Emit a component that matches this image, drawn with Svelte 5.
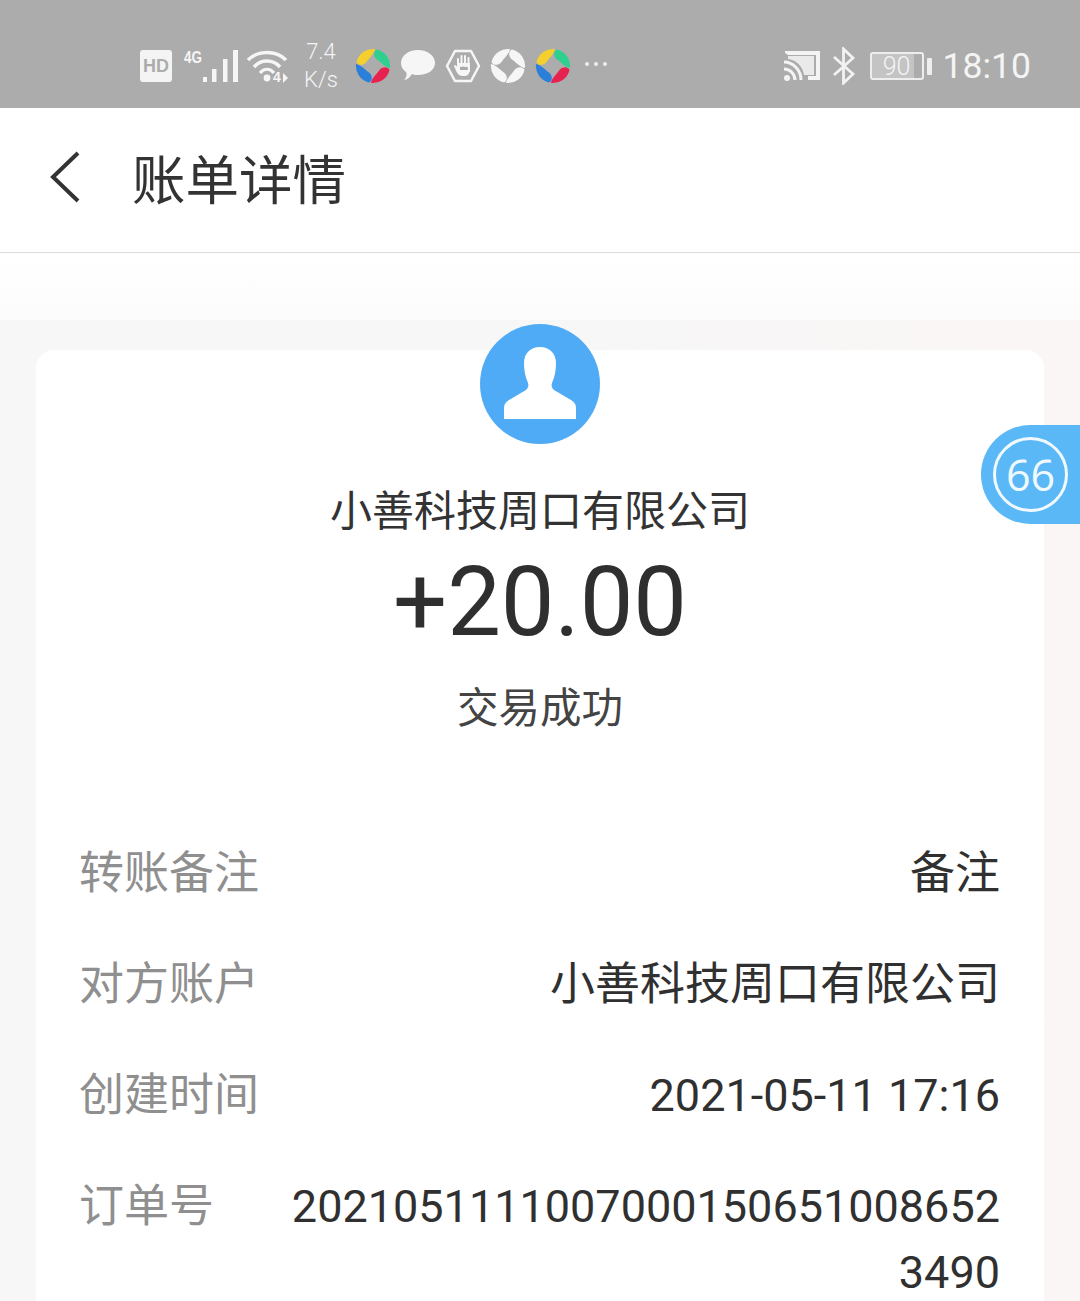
<script lang="ts">
	const rows = [
		{ label: '转账备注', value: '备注' },
		{ label: '对方账户', value: '小善科技周口有限公司' },
		{ label: '创建时间', value: '2021-05-11 17:16' },
		{ label: '订单号', value: '20210511110070001506510086523490' }
	];
	const petals = [
		{ color: '#f5cf2e', rot: 0 },
		{ color: '#2fcf8f', rot: 90 },
		{ color: '#e8224e', rot: 180 },
		{ color: '#2c7fd8', rot: 270 }
	];
	const petal = 'M-16.500 -4 A17 17 0 0 1 2 -17 C1 -12 -3 -9 -6.500 -4 C-9 -0.500 -15 0 -16.500 -4Z';
</script>

{#snippet swirl(colored: boolean)}
	<svg class="ic swirl" viewBox="-18 -18 36 36">
		{#each petals as p}
			<path d={petal} fill={colored ? p.color : '#f6f6f6'} transform="rotate({p.rot})" />
		{/each}
	</svg>
{/snippet}

<div class="page">
	<div class="statusbar">
		<div class="status-left">
			<svg class="ic hd" viewBox="0 0 32 32">
				<rect width="32" height="32" rx="3" fill="#f4f4f4" />
				<text x="16" y="22" text-anchor="middle" class="hd-text" textLength="26" lengthAdjust="spacingAndGlyphs">HD</text>
			</svg>
			<svg class="ic signal" viewBox="0 0 54 34">
				<text x="0" y="14" class="g4" textLength="18" lengthAdjust="spacingAndGlyphs">4G</text>
				<rect x="19" y="28" width="4" height="5" fill="#f6f6f6" />
				<rect x="28" y="20" width="4.500" height="13" fill="#f6f6f6" />
				<rect x="39" y="10" width="4.500" height="23" fill="#f6f6f6" />
				<rect x="49" y="1" width="5" height="32" fill="#f6f6f6" />
			</svg>
			<svg class="ic wifi" viewBox="0 0 42 34" overflow="visible">
				<path d="M1 11 C11 1 29 1 39 11" fill="none" stroke="#f6f6f6" stroke-width="3.600" />
				<path d="M7 18 C14 10 26 10 33 18" fill="none" stroke="#f6f6f6" stroke-width="3.600" />
				<path d="M13 24 C17 19 23 19 27 24" fill="none" stroke="#f6f6f6" stroke-width="3.200" />
				<circle cx="20" cy="29" r="3.400" fill="#f6f6f6" />
				<text x="26" y="33" class="g4 small">4</text>
				<path d="M36 24 L41 29 L36 34Z" fill="#f6f6f6" />
			</svg>
			<div class="speed"><span>7.4</span><span>K/s</span></div>
			{@render swirl(true)}
			<svg class="ic bubble" viewBox="0 0 36 34">
				<path d="M18 1 C28 1 35 7 35 14 C35 21 28 26 18 26 C16 26 14 26 12 25 C10 28 7 31 4 31 C7 28 7 25 6 23 C3 21 1 18 1 14 C1 7 8 1 18 1Z" fill="#f6f6f6" />
			</svg>
			<svg class="ic hand" viewBox="0 0 36 34">
				<path d="M10 2 H26 L34 17 L26 32 H10 L2 17Z" fill="none" stroke="#f6f6f6" stroke-width="2.500" stroke-linejoin="round" />
				<path d="M13 17 V10 M16.500 17 V7 M20 17 V7 M23.500 18 V9 M10 17 C12 20 12 26 17 26 H20 C23 26 24 23 24 18 M14 15 H24 V22 H14Z" fill="#f6f6f6" stroke="#f6f6f6" stroke-width="2" stroke-linecap="round" />
			</svg>
			{@render swirl(false)}
			{@render swirl(true)}
			<div class="more"><i></i><i></i><i></i></div>
		</div>
		<div class="status-right">
			<svg class="ic cast" viewBox="0 0 38 32">
				<path d="M1 3 V1 H36 V30 H24 V26 H32 V5 H4" fill="#f4f4f4" />
				<path d="M4 6 H30 V25 H20 C19 17 13 10 4 9Z" fill="#f4f4f4" opacity=".85" />
				<path d="M0 12 C9 12 17 20 17 30 M0 19 C6 19 11 24 11 30" fill="none" stroke="#f4f4f4" stroke-width="3" />
				<circle cx="3" cy="28" r="3" fill="#f4f4f4" />
			</svg>
			<svg class="ic bt" viewBox="0 0 24 38">
				<path d="M2 10 L21 27 L11.500 36 V2 L21 11 L2 28" fill="none" stroke="#f2f2f2" stroke-width="2.800" />
			</svg>
			<div class="battery">
				<div class="battery-body"><span>90</span></div>
				<div class="battery-cap"></div>
			</div>
			<span class="clock">18:10</span>
		</div>
	</div>

	<header class="topbar">
		<svg class="back" viewBox="0 0 32 52">
			<path d="M29 2 L4 26 L29 50" fill="none" stroke="#333" stroke-width="4" />
		</svg>
		<h1>账单详情</h1>
	</header>

	<main class="content">
		<div class="fade"></div>
		<section class="card">
			<div class="avatar">
				<svg viewBox="0 0 120 120">
					<path d="M24 95 V84 C24 80 26 78 29 76 L46 66 C48 64 49 62 48 59 C45 52 44 46 44 39 C44 29 51 23 60 23 C69 23 76 29 76 39 C76 46 75 52 72 59 C71 62 72 64 74 66 L91 76 C94 78 96 80 96 84 V95Z" fill="#fff" />
				</svg>
			</div>
			<div class="name">小善科技周口有限公司</div>
			<div class="amount">+20.00</div>
			<div class="state">交易成功</div>
			<dl class="rows">
				{#each rows as row (row.label)}
					<div class="row">
						<dt>{row.label}</dt>
						<dd>{row.value}</dd>
					</div>
				{/each}
			</dl>
		</section>
	</main>

	<div class="float-badge">
		<div class="ring">66</div>
	</div>
</div>

<style>
	:global(body) {
		margin: 0;
		background: #fff;
	}

	.page {
		position: relative;
		width: 1080px;
		height: 1301px;
		overflow: hidden;
		font-family: Roboto, 'Noto Sans CJK SC', sans-serif;
		color: #333;
	}

	.statusbar {
		height: 108px;
		background: #acacac;
		display: flex;
		align-items: center;
		justify-content: space-between;
		padding: 24px 49px 0 140px;
		box-sizing: border-box;
		color: #f4f4f4;
	}

	.status-left,
	.status-right {
		display: flex;
		align-items: center;
	}

	.ic {
		display: block;
		flex: none;
	}

	.hd {
		width: 32px;
		height: 32px;
		margin-right: 12px;
	}

	.hd-text {
		font: 700 19px 'Liberation Sans', sans-serif;
		fill: #acacac;
	}

	.g4 {
		font: 700 17px 'Liberation Sans', sans-serif;
		fill: #f6f6f6;
	}

	.g4.small {
		font-size: 14px;
	}

	.signal {
		width: 54px;
		height: 34px;
		margin-right: 9px;
	}

	.wifi {
		width: 42px;
		height: 34px;
		margin-right: 14px;
	}

	.speed {
		display: flex;
		flex-direction: column;
		align-items: center;
		width: 36px;
		font-size: 22px;
		line-height: 28px;
		margin-right: 16px;
		font-weight: 300;
	}

	.swirl {
		width: 36px;
		height: 36px;
	}

	.bubble {
		width: 36px;
		height: 34px;
		margin: 0 9px 0 9px;
	}

	.hand {
		width: 36px;
		height: 34px;
		margin-right: 9px;
	}

	.swirl + .swirl {
		margin-left: 9px;
	}

	.more {
		display: flex;
		gap: 5px;
		margin-left: 14px;
		margin-bottom: 4px;
	}

	.more i {
		width: 4px;
		height: 4px;
		border-radius: 50%;
		background: #eee;
	}

	.cast {
		width: 38px;
		height: 32px;
		margin-right: 10px;
	}

	.bt {
		width: 24px;
		height: 38px;
		margin-right: 14px;
	}

	.battery {
		display: flex;
		align-items: center;
		gap: 3px;
		margin-right: 11px;
	}

	.battery-body {
		width: 54px;
		height: 28px;
		box-sizing: border-box;
		border: 2px solid #eee;
		border-radius: 3px;
		background: linear-gradient(90deg, #c4c4c4 0 84%, transparent 84%);
		display: flex;
		align-items: center;
		justify-content: center;
		font-size: 25px;
		font-weight: 300;
	}

	.battery-cap {
		width: 5px;
		height: 17px;
		background: #eee;
		border-radius: 1px;
	}

	.clock {
		font-size: 35.500px;
		font-weight: 400;
	}

	.topbar {
		height: 145px;
		box-sizing: border-box;
		background: #fff;
		border-bottom: 1px solid #dcdcdc;
		display: flex;
		align-items: center;
		padding: 0 0 7px 49px;
	}

	.back {
		width: 32px;
		height: 52px;
		margin-right: 51px;
	}

	h1 {
		margin: 0;
		font-size: 53.500px;
		font-weight: 400;
		color: #333;
	}

	.content {
		background: linear-gradient(90deg, #f7f7f7 0 50%, #faf6f5 100%);
		height: 1048px;
	}

	.fade {
		height: 67px;
		background: linear-gradient(#fff, #fcfcfc);
	}

	.card {
		margin: 30px 36px 0;
		background: #fff;
		border-radius: 18px 18px 0 0;
		height: 960px;
		padding: 0 44px;
		display: flex;
		flex-direction: column;
		align-items: center;
	}

	.avatar {
		width: 120px;
		height: 120px;
		border-radius: 50%;
		background: #4fabf5;
		margin-top: -26px;
	}

	.avatar svg {
		display: block;
		width: 120px;
		height: 120px;
	}

	.name {
		margin-top: 38px;
		font-size: 42px;
		line-height: 60px;
		color: #333;
	}

	.amount {
		margin-top: 5px;
		font-size: 95.500px;
		line-height: 110px;
		color: #2f2f2f;
	}

	.state {
		margin-top: 23px;
		font-size: 41.500px;
		line-height: 58px;
		color: #444;
	}

	.rows {
		width: 100%;
		margin: 103px 0 0;
	}

	.row {
		display: flex;
		justify-content: space-between;
		align-items: flex-start;
		margin-bottom: 45px;
		font-size: 45px;
		line-height: 66px;
	}

	dt {
		flex: none;
		margin-left: -1px;
		color: #8f8f8f;
	}

	dd {
		margin: 0;
		max-width: 710px;
		color: #303030;
		text-align: right;
		word-break: break-all;
	}

	.float-badge {
		position: absolute;
		left: 981px;
		top: 425px;
		width: 99px;
		height: 99px;
		box-sizing: border-box;
		background: #5ab8f6;
		border-radius: 50px 0 0 50px;
		padding: 12px;
	}

	.ring {
		width: 75px;
		height: 75px;
		box-sizing: border-box;
		border: 3.500px solid #f0f9ff;
		border-radius: 50%;
		color: #f0f9ff;
		font-size: 43px;
		font-weight: 500;
		display: flex;
		align-items: center;
		justify-content: center;
		font-family: 'Open Sans', sans-serif;
	}
</style>
